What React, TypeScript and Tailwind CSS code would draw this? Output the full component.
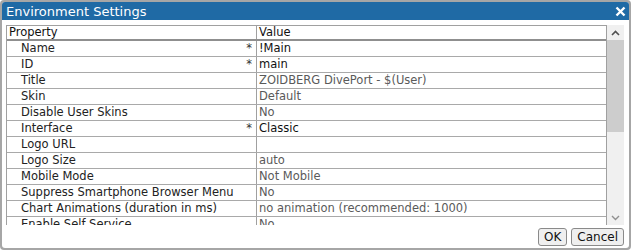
import React from 'react'

type Row = { label: string; value: string; set?: boolean }

const ROWS: Row[] = [
  { label: 'Name', value: '!Main', set: true },
  { label: 'ID', value: 'main', set: true },
  { label: 'Title', value: 'ZOIDBERG DivePort - $(User)' },
  { label: 'Skin', value: 'Default' },
  { label: 'Disable User Skins', value: 'No' },
  { label: 'Interface', value: 'Classic', set: true },
  { label: 'Logo URL', value: '' },
  { label: 'Logo Size', value: 'auto' },
  { label: 'Mobile Mode', value: 'Not Mobile' },
  { label: 'Suppress Smartphone Browser Menu', value: 'No' },
  { label: 'Chart Animations (duration in ms)', value: 'no animation (recommended: 1000)' },
  { label: 'Enable Self Service', value: 'No' },
]

export default function App() {
  return (
    <div
      className="w-[631px] h-[250px] bg-[#a6a6a6] p-[2px] rounded-[4px] text-[11.5px] leading-none"
      style={{ fontFamily: '"DejaVu Sans", Verdana, sans-serif' }}
    >
      <div className="w-full h-full bg-white rounded-[3px] flex flex-col overflow-hidden">
        {/* Title bar */}
        <div className="h-[18px] bg-[#1f6aa5] flex items-center justify-between pl-[4px] pr-[3px] shrink-0">
          <span className="text-white text-[13px] pt-[1px]">Environment Settings</span>
          <svg width="11" height="11" viewBox="0 0 11 11">
            <path d="M1.5 1.5 L9.5 9.5 M9.5 1.5 L1.5 9.5" stroke="white" strokeWidth="2.4" />
          </svg>
        </div>

        {/* Grid */}
        <div className="mt-[5px] ml-[4px] mr-[4px] h-[200px] flex overflow-hidden shrink-0">
          <div className="w-[601px] border border-[#a0a0a0] border-b-0 overflow-hidden">
            <div className="flex h-[15px] border-b-2 border-[#8f8f8f] text-[#111]">
              <div className="w-[250px] pl-[2px] pt-[1px] flex items-center border-r border-[#a0a0a0]">Property</div>
              <div className="flex-1 pl-[2px] pt-[1px] flex items-center">Value</div>
            </div>
            {ROWS.map(r => (
              <div key={r.label} className="flex h-[16px] border-b border-[#a9a9a9]">
                <div className="w-[250px] pl-[14px] pr-[4px] pt-[1px] flex items-center justify-between border-r border-[#a0a0a0] text-[#222]">
                  <span className="whitespace-nowrap">{r.label}</span>
                  {r.set && <span className="text-[#333]">*</span>}
                </div>
                <div className={'flex-1 pl-[2px] pt-[1px] flex items-center whitespace-nowrap ' + (r.set ? 'text-[#111]' : 'text-[#5a5a5a]')}>
                  {r.value}
                </div>
              </div>
            ))}
          </div>
          {/* Scrollbar */}
          <div className="w-[17px] bg-[#f0f0f0] flex flex-col shrink-0">
            <div className="h-[15px] flex items-center justify-center">
              <svg width="9" height="6" viewBox="0 0 9 6">
                <path d="M1 5 L4.5 1.5 L8 5" fill="none" stroke="#505050" strokeWidth="1.6" />
              </svg>
            </div>
            <div className="h-[92px] bg-[#cdcdcd]" />
            <div className="flex-1" />
            <div className="h-[15px] flex items-center justify-center">
              <svg width="9" height="6" viewBox="0 0 9 6">
                <path d="M1 1 L4.5 4.5 L8 1" fill="none" stroke="#909090" strokeWidth="1.4" />
              </svg>
            </div>
          </div>
        </div>

        {/* Footer */}
        <div className="flex justify-end gap-[4px] pr-[5px] pt-[3px]">
          <button className="h-[18px] px-[5px] border border-[#8a8a8a] rounded-[3px] bg-[#efefef] text-[#111] text-[12px] leading-none">
            OK
          </button>
          <button className="h-[18px] px-[5px] border border-[#8a8a8a] rounded-[3px] bg-[#efefef] text-[#111] text-[12px] leading-none">
            Cancel
          </button>
        </div>
      </div>
    </div>
  )
}
